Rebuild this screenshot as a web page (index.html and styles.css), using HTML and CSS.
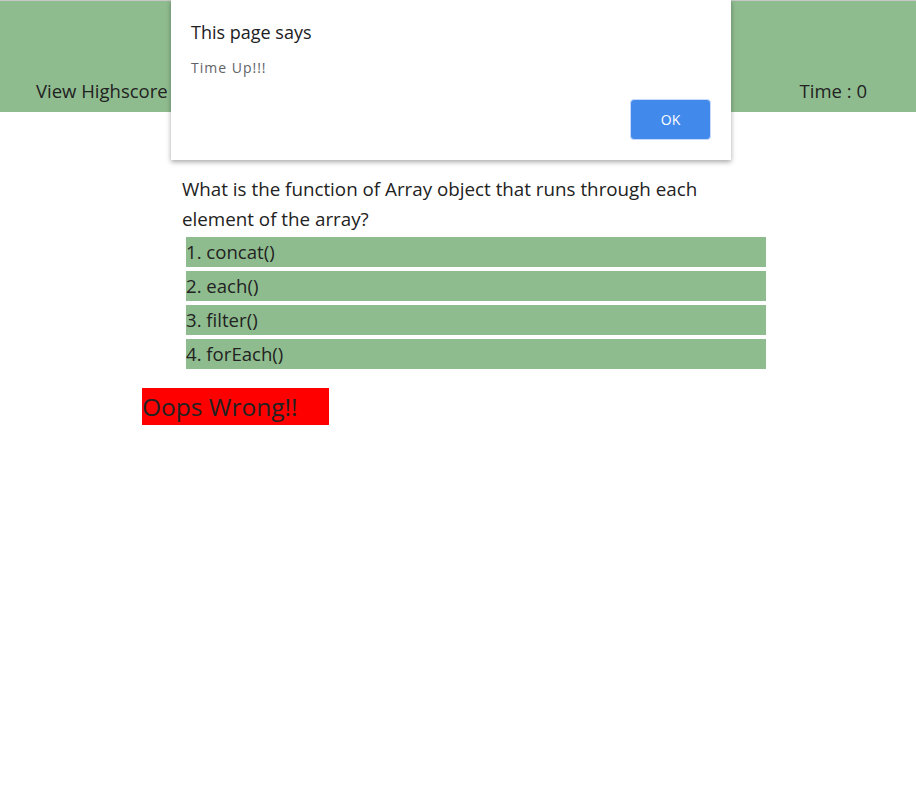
FILE: index.html
```html
<!DOCTYPE html>
<html>
<head>
<meta charset="utf-8">
<link rel="stylesheet" href="styles.css">
</head>
<body>
<header class="top">
  <a class="hs">View Highscore</a>
  <span class="time">Time : 0</span>
</header>
<main class="quiz">
  <div class="qbox">
    <p class="question">What is the function of Array object that runs through each element of the array?</p>
    <ul class="opts">
      <li>1. concat()</li>
      <li>2. each()</li>
      <li>3. filter()</li>
      <li>4. forEach()</li>
    </ul>
  </div>
  <div class="result">Oops Wrong!!</div>
</main>
<div class="alert">
  <div class="alert-title">This page says</div>
  <div class="alert-msg">Time Up!!!</div>
  <div class="alert-actions"><button class="ok">OK</button></div>
</div>
</body>
</html>
```
FILE: styles.css
```css
html, body {
  margin: 0;
  padding: 0;
  background: #fff;
}
body {
  font-family: "Open Sans", Lato, sans-serif;
  color: #222;
  border-top: 1px solid #c8c8c8;
}
.top {
  height: 111px;
  background: #8fbc8f;
  display: flex;
  justify-content: space-between;
  align-items: flex-end;
  padding: 0 49px 9px 36px;
  box-sizing: border-box;
  font-size: 18.5px;
}
.hs { color: #222; }
.quiz {
  padding: 62px 0 0 142px;
}
.qbox {
  width: 584px;
  margin-left: 40px;
}
.question {
  margin: 0;
  max-width: 560px;
  font-size: 18.8px;
  line-height: 30px;
}
.opts {
  list-style: none;
  margin: 3px 0 0 4px;
  padding: 0;
  display: flex;
  flex-direction: column;
  gap: 4px;
}
.opts li {
  background: #8fbc8f;
  height: 30px;
  line-height: 30px;
  font-size: 18.6px;
}
.result {
  margin-top: 19px;
  width: 187px;
  height: 37px;
  line-height: 37px;
  background: #ff0000;
  font-size: 24.5px;
}
.alert {
  position: absolute;
  left: 171px;
  top: 0;
  width: 560px;
  height: 160px;
  background: #fff;
  box-shadow: 0 2px 5px rgba(0,0,0,0.35);
  box-sizing: border-box;
  padding: 20px 20px 0 20px;
  font-family: "Open Sans", sans-serif;
}
.alert-title {
  font-size: 18px;
  color: #202124;
  line-height: 24px;
}
.alert-msg {
  margin-top: 14px;
  font-size: 14px;
  letter-spacing: 1px;
  color: #5f6368;
}
.alert-actions {
  display: flex;
  justify-content: flex-end;
  margin-top: 22px;
}
.ok {
  width: 81px;
  height: 41px;
  background: #4289ec;
  border: 1px solid #c6dafc;
  border-radius: 4px;
  color: #fff;
  font-family: "Open Sans", sans-serif;
  font-size: 14px;
}
```
